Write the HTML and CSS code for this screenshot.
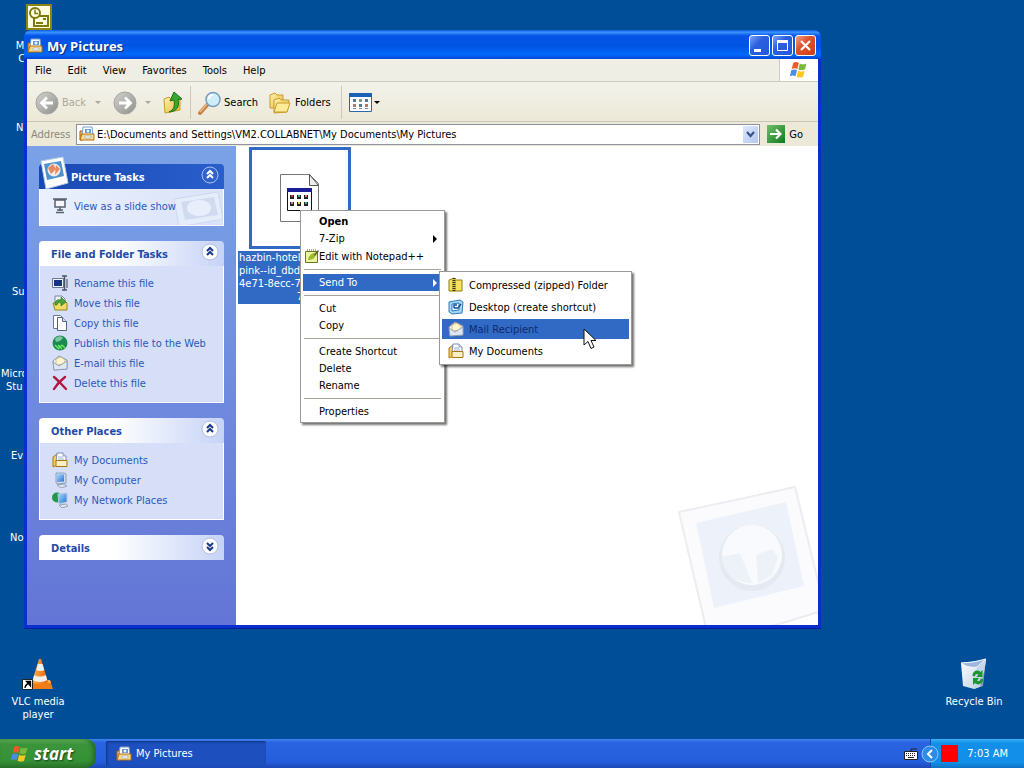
FILE: index.html
```html
<!DOCTYPE html>
<html lang="en">
<head>
<meta charset="utf-8">
<title>My Pictures</title>
<link rel="stylesheet" href="styles.css">
</head>
<body>
<svg class="defs" aria-hidden="true">
  <defs>
    <linearGradient id="gCone" x1="0" x2="1"><stop offset="0" stop-color="#ffb14a"/><stop offset="1" stop-color="#e8650c"/></linearGradient>
    <linearGradient id="gGrey" x1="0" y1="0" x2="1" y2="1"><stop offset="0" stop-color="#d2d2ce"/><stop offset="1" stop-color="#8f8f8c"/></linearGradient>
    <linearGradient id="gFold" x1="0" y1="0" x2="1" y2="1"><stop offset="0" stop-color="#fdf3ae"/><stop offset="1" stop-color="#e9b73a"/></linearGradient>
    <linearGradient id="gGo" x1="0" y1="0" x2="1" y2="1"><stop offset="0" stop-color="#6fc06a"/><stop offset="1" stop-color="#0f7a1c"/></linearGradient>
    <linearGradient id="gScr" x1="0" y1="0" x2="1" y2="1"><stop offset="0" stop-color="#a9dcff"/><stop offset="1" stop-color="#2a6fd0"/></linearGradient>
    <linearGradient id="gBin" x1="0" y1="0" x2="1" y2="1"><stop offset="0" stop-color="#ffffff"/><stop offset="1" stop-color="#b9cce2"/></linearGradient>
  </defs>
  <symbol id="i-pics" viewBox="0 0 16 16">
    <path d="M1 5h3v9H1z" fill="#f2b84c" stroke="#a8640e"/>
    <path d="M4 1h9l1 9H3z" fill="#fff" stroke="#7d9cc4"/>
    <path d="M6 3h6v4H6z" fill="#5d95d6"/><circle cx="9" cy="5" r="1.5" fill="#e9f4ff"/>
    <path d="M1 14l2-6h12v6z" fill="#fbd98b" stroke="#b26f12"/>
    <path d="M6 10h6v2H6z" fill="#fff" stroke="#8aa3c0" stroke-width=".6"/>
  </symbol>
  <symbol id="i-docs" viewBox="0 0 16 16">
    <path d="M1 5l4-3v11l-4 2z" fill="#f7cf5f" stroke="#a9790f"/>
    <path d="M5 1h6l3 3v6H4z" fill="#fff" stroke="#7a8fb5"/><path d="M11 1v3h3" fill="#dbe4f4" stroke="#7a8fb5" stroke-width=".8"/>
    <path d="M6 5h5M6 7h6" stroke="#9ab0d4"/>
    <path d="M4 8.500h11v6H4z" fill="#fbf0c4" stroke="#a9790f"/>
  </symbol>
  <symbol id="i-flag" viewBox="0 0 20 18">
    <path d="M4.200 2C6 .8 8 .8 9.800 2L8.300 8C6.500 6.900 4.600 7 2.700 8z" fill="#ee5a26"/>
    <path d="M10.800 2.400c2 1.200 4.200 1.200 6.700 0L16 8.300c-2.300 1.200-4.500 1.200-6.600 0z" fill="#77bb3c"/>
    <path d="M2.300 9.200c2-1.100 3.900-1 5.700 0L6.500 15.200c-1.800-1-3.700-1.100-5.700 0z" fill="#4a8ce0"/>
    <path d="M9.100 9.700c2 1.100 4.200 1.200 6.600 0l-1.600 6c-2.300 1.200-4.500 1.100-6.500 0z" fill="#fbc723"/>
  </symbol>
  <symbol id="i-mail" viewBox="0 0 16 16">
    <path d="M1 6l6-5 8 4v9l-13 1z" fill="#f6f7fb" stroke="#8793ad"/>
    <path d="M4 4l5-2 4 3v4l-9 1z" fill="#fff6cf" stroke="#c7a65b" stroke-width=".7"/>
    <path d="M1 7l6 4 8-5v8L2 15z" fill="#dfe7f5" stroke="#8793ad" stroke-width=".8"/>
  </symbol>
  <symbol id="i-up" viewBox="0 0 18 18"><circle cx="9" cy="9" r="8" class="disc"/><path d="M6 8l3-3 3 3M6 12l3-3 3 3" class="chev"/></symbol>
  <symbol id="i-down" viewBox="0 0 18 18"><circle cx="9" cy="9" r="8" class="disc"/><path d="M6 6l3 3 3-3M6 10l3 3 3-3" class="chev"/></symbol>
</svg>

<div class="desktop">
  <div class="shortcut s-outlook">
    <svg width="26" height="26" viewBox="0 0 26 26"><path d="M0 0h26v26H0z" fill="#8b8412"/><path d="M2 2h22v22H2z" fill="#fffde2"/><path d="M10 12h12v10H8v-8" fill="none" stroke="#80790b" stroke-width="2"/><circle cx="9" cy="9" r="5" fill="#fffde2" stroke="#80790b" stroke-width="2"/><path d="M9 5.500V9.500h3" fill="none" stroke="#80790b" stroke-width="1.500"/><path d="M10 19h7M17 15h3" stroke="#80790b" stroke-width="2"/></svg>
  </div>
  <span class="shortcut s-mc">M<br>&nbsp;C</span>
  <span class="shortcut s-n">N</span>
  <span class="shortcut s-su">Su</span>
  <span class="shortcut s-micro">Micro<br>Stu</span>
  <span class="shortcut s-ev">Ev</span>
  <span class="shortcut s-no">No</span>
  <div class="shortcut s-vlc">
    <svg width="32" height="32" viewBox="0 0 32 32"><path d="M8 22h20l3 9H6z" fill="#ef7d16"/><path d="M8 22h20l1 3H7z" fill="#ffae52"/><path d="M17 1h2l7 23c-4 3-12 3-16 0z" fill="url(#gCone)"/><path d="M15.800 6h4.700l1.800 6c-2 1.300-6 1.300-8 0zM12.300 17c3 2 8 2 11.500 0l1.400 5c-4 2.600-10.500 2.600-14.400 0z" fill="#f0f0ee"/><path d="M.5 21.500h10v10H.5z" fill="#fff" stroke="#222"/><path d="M3 30c0-3 1-4 4-5M4.500 23.500h4V28z" fill="#000" stroke="#000" stroke-width="1.300"/></svg>
    <span>VLC media<br>player</span>
  </div>
  <div class="shortcut s-bin">
    <svg width="32" height="32" viewBox="0 0 32 32"><path d="M3 5l25-3-4 26-8 3-11-3z" fill="url(#gBin)"/><path d="M3 5l12-1 13-3-9 8c-5 1-11 0-16-4z" fill="#9db8dc" stroke="#f4f9ff"/><path d="M28 2l-4 26-8 3 3-22z" fill="#c5d6e8"/><path d="M27 10l-2 18-3 1z" fill="#7f99b8"/><path d="M14.500 18c0-5 5-7 8-4l2-2v7h-6l2-2.500c-2-1.500-3.500 0-3.500 2zM25 21c0 5-5 7-8 4l-2 2v-7h6l-2 2.500c2 1.500 3.500 0 3.500-2z" fill="#1e9433"/></svg>
    <span>Recycle Bin</span>
  </div>

  <main class="window">
    <header class="titlebar">
      <svg width="16" height="16"><use href="#i-pics"/></svg>
      <h1>My Pictures</h1>
      <div class="winbtns">
        <button class="wb" aria-label="Minimize"><svg width="19" height="19"><path d="M4 13h7v3H4z" fill="#fff"/></svg></button>
        <button class="wb" aria-label="Maximize"><svg width="19" height="19"><path d="M4.500 5.500h10v9h-10z" fill="none" stroke="#fff"/><path d="M4 4h11v3H4z" fill="#fff"/></svg></button>
        <button class="wb close" aria-label="Close"><svg width="19" height="19"><path d="M5 5l9 9M14 5l-9 9" stroke="#fff" stroke-width="2.200"/></svg></button>
      </div>
    </header>

    <nav class="menubar">
      <button>File</button><button>Edit</button><button>View</button><button>Favorites</button><button>Tools</button><button>Help</button>
      <span class="flagcell"><svg width="20" height="18"><use href="#i-flag"/></svg></span>
    </nav>

    <div class="toolbar">
      <button class="tool off back"><svg width="24" height="24"><circle cx="12" cy="12" r="11" fill="url(#gGrey)" stroke="#a5a5a0"/><path d="M18 12H7M12 6.500L6.500 12l5.500 5.500" fill="none" stroke="#fff" stroke-width="2.800"/></svg>Back<i class="caret"></i></button>
      <button class="tool off fwd" aria-label="Forward"><svg width="24" height="24"><circle cx="12" cy="12" r="11" fill="url(#gGrey)" stroke="#a5a5a0"/><path d="M6 12h11M12 6.500l5.500 5.500-5.500 5.500" fill="none" stroke="#fff" stroke-width="2.800"/></svg><i class="caret"></i></button>
      <button class="tool" aria-label="Up"><svg width="20" height="24"><path d="M1 8l5-2 2 2 9-1v12L2 22z" fill="url(#gFold)" stroke="#c99b2b"/><path d="M6 21c5-2 6-6 5-12l-4 1 4-9 8 7-4 .5c2 8-2 12-9 12.500z" fill="#38a92f" stroke="#17701a"/></svg></button>
      <hr class="vline">
      <button class="tool search"><svg width="24" height="24"><path d="M2 22l8-9" stroke="#c98044" stroke-width="4" stroke-linecap="round"/><path d="M2 21l7-8" stroke="#f0bd87" stroke-width="1.200"/><circle cx="15" cy="8.500" r="7" fill="#cdeefa" stroke="#7a9cc0" stroke-width="1.500"/><path d="M11 8c0-3 2-4 4-4" stroke="#fff" stroke-width="2" fill="none"/></svg>Search</button>
      <button class="tool folders"><svg width="22" height="22"><path d="M1 3l5-2 2 2h6v13H1z" fill="url(#gFold)" stroke="#c99b2b"/><path d="M5 8l5-2 2 2h8l-2 12-13 1z" fill="url(#gFold)" stroke="#c99b2b"/><path d="M5 20l3-9h13l-3 9z" fill="#fdeb98" stroke="#c99b2b"/></svg>Folders</button>
      <hr class="vline">
      <button class="tool views" aria-label="Views"><svg width="23" height="19"><path d="M.5.500h22v18H.5z" fill="#fff" stroke="#2b68ad"/><path d="M0 0h23v4H0z" fill="#1b61b6"/><path d="M4 6h3v3H4zM16 6h3v3h-3zM10 11h3v3h-3z" fill="#557a9e"/><path d="M10 6h3v3h-3z" fill="#7b9c86"/><path d="M4 11h3v3H4zM16 11h3v3h-3z" fill="#b57768"/><path d="M4 15.500h3M10 15.500h3M16 15.500h3" stroke="#889"/></svg><i class="caret"></i></button>
    </div>

    <form class="address">
      <label for="addr">Address</label>
      <div class="combo">
        <svg width="16" height="16"><use href="#i-pics"/></svg>
        <input id="addr" type="text" value="E:\Documents and Settings\VM2.COLLABNET\My Documents\My Pictures">
        <button type="button" class="drop" aria-label="Address history"><svg width="15" height="17"><path d="M4 6l3.500 4L11 6" fill="none" stroke="#3c5488" stroke-width="2.200"/></svg></button>
      </div>
      <button type="button" class="go"><svg width="18" height="18"><path d="M0 0h18v18H0z" fill="url(#gGo)"/><path d="M3 9h10M9 4.500L13.500 9 9 13.500" fill="none" stroke="#fff" stroke-width="2.200"/></svg>Go</button>
    </form>

    <div class="content">
      <aside class="tasks">
        <section class="box primary">
          <svg class="badge" width="32" height="34" viewBox="0 0 32 34"><path d="M2 5l22-4 5 26-22 6z" fill="#fff" stroke="#b9c9e2"/><path d="M5 8l17-3 3 15-17 4z" fill="#4c93cf"/><circle cx="15" cy="14" r="6.500" fill="#f3ece6"/><path d="M9 12l5-4 3 5-5 5zM17 9l4 4-5 6z" fill="#e58a62"/></svg>
          <h2>Picture Tasks<button aria-label="Collapse"><svg width="18" height="18"><use href="#i-up"/></svg></button></h2>
          <div class="body">
            <svg class="mark" width="54" height="34" viewBox="0 0 54 34"><path d="M5 8l44-7 5 27-44 8z" fill="#e6edfa" stroke="#cdd8ee"/><path d="M12 11l33-5 4 18-33 5z" fill="#d0dbf0"/><ellipse cx="30" cy="17" rx="12" ry="8" fill="#e8eefa"/></svg>
            <a href="#"><svg width="16" height="16"><path d="M1 1h14M3 2h10v7H3z" fill="#f5f7fa" stroke="#59616e" stroke-width="1.500"/><path d="M8 9v4M4 14.500h8M5 12h6" stroke="#59616e" stroke-width="1.500"/></svg>View as a slide show</a>
          </div>
        </section>
        <section class="box">
          <h2>File and Folder Tasks<button aria-label="Collapse"><svg width="18" height="18"><use href="#i-up"/></svg></button></h2>
          <div class="body">
            <a href="#"><svg width="16" height="16"><path d="M.5 3.500h11v9H.5z" fill="#eef3fb" stroke="#6b7892"/><path d="M2 5h8v6H2z" fill="#16337c"/><path d="M10 1h5M10 15h5M12.500 1v14" stroke="#4d5668" stroke-width="1.500"/><path d="M15 4v9" stroke="#8a93a5" stroke-width="2"/></svg>Rename this file</a>
            <a href="#"><svg width="16" height="16"><path d="M3 1h7l3 3v9H3z" fill="#f5f7fb" stroke="#7783a0"/><path d="M1 8h5l1-2h6l2 2v7H3z" fill="#f1dc63" stroke="#94851f"/><path d="M3 10c0-5 3-6 6-5V2l5 5-5 4V8c-2-1-4 0-4 2z" fill="#4ba33b" stroke="#206b20" stroke-width=".6"/></svg>Move this file</a>
            <a href="#"><svg width="16" height="16"><path d="M1.500.500h7l3 3v10h-10z" fill="#fff" stroke="#6b7a99"/><path d="M5.500 2.500h5l4 4v9h-9z" fill="#fff" stroke="#536485"/><path d="M10.500 2.500v4h4" fill="#d5def0" stroke="#536485"/></svg>Copy this file</a>
            <a href="#"><svg width="16" height="16"><circle cx="8" cy="8" r="7.500" fill="#1c8a50"/><path d="M3 4c3-4 7-3 8-1l-3 3-4 1z" fill="#7cc9a0"/><path d="M3 10l4 4M6 10l4 4M6 14l4-4M10 10l3 3" stroke="#6df060" stroke-width="1.300"/></svg>Publish this file to the Web</a>
            <a href="#"><svg width="16" height="16"><use href="#i-mail"/></svg>E-mail this file</a>
            <a href="#"><svg width="16" height="16"><path d="M2 2c4 3 8 8 12 12M13 2C9 5 5 9 2 14" fill="none" stroke="#b5173f" stroke-width="2.400" stroke-linecap="round"/></svg>Delete this file</a>
          </div>
        </section>
        <section class="box">
          <h2>Other Places<button aria-label="Collapse"><svg width="18" height="18"><use href="#i-up"/></svg></button></h2>
          <div class="body">
            <a href="#"><svg width="16" height="16"><use href="#i-docs"/></svg>My Documents</a>
            <a href="#"><svg width="16" height="16"><path d="M4 1h8l2 1v9l-8 1-2-1z" fill="#cfd9ea" stroke="#7890b5" stroke-width=".8"/><path d="M5 2l7 .5v7L5 10z" fill="url(#gScr)"/><path d="M5 13l7-1 3 2-6 2z" fill="#dde3ec" stroke="#8593aa" stroke-width=".8"/></svg>My Computer</a>
            <a href="#"><svg width="16" height="16"><circle cx="5" cy="5.500" r="5" fill="#1f9a4e"/><path d="M6 2l9-1v9l-8 2z" fill="url(#gScr)" stroke="#b7cbe4"/><path d="M7 13l7-1 2 2-6 2z" fill="#dde3ec" stroke="#8593aa" stroke-width=".8"/></svg>My Network Places</a>
          </div>
        </section>
        <section class="box">
          <h2>Details<button aria-label="Expand"><svg width="18" height="18"><use href="#i-down"/></svg></button></h2>
        </section>
      </aside>

      <div class="files">
        <figure class="file">
          <div class="thumb"><svg width="40" height="48"><path d="M.5.500h29l9 9v38H.5z" fill="#fff" stroke="#777"/><path d="M29.500.500l9 11h-9z" fill="#eee" stroke="#555"/><path d="M7.500 14.500h24v22h-24z" fill="#fff" stroke="#111"/><path d="M7 14h25v4H7z" fill="#1a1e96"/><path d="M10 21h4v4h-4zM17 21h4v4h-4zM24 21h4v4h-4zM10 28h4v4h-4zM17 28h4v4h-4zM24 28h4v4h-4z" fill="#222"/><path d="M11 21h2v2h-2z" fill="#c33"/><path d="M18 21h2v2h-2zM25 28h2v2h-2z" fill="#4a9"/><path d="M25 21h2v2h-2zM11 28h2v2h-2z" fill="#d77"/><path d="M18 28h2v2h-2z" fill="#dd3"/></svg></div>
          <figcaption>hazbin-hotel-<br>pink--id_dbd-<br>4e71-8ecc-7<span>7</span></figcaption>
        </figure>
        <svg class="watermark" width="142" height="140" viewBox="0 0 142 140"><path d="M3 27L119 2l30 123L34 160z" fill="#fbfbfe" stroke="#ececf1" stroke-width="2"/><path d="M20 38l90-21 18 84-90 22z" fill="#edf1f9"/><circle cx="76" cy="73" r="33" fill="#e4e9f2"/><circle cx="76" cy="70" r="30" fill="#f9fafd"/><path d="M46 72l18-4 12 30c-16 0-28-8-30-26zM80 70l16-6 6 8-6 18-14 8z" fill="#edf1f8"/></svg>
      </div>
    </div>
  </main>

  <div class="popup context" role="menu">
    <button class="row bold">Open</button>
    <button class="row">7-Zip<i class="arrow"></i></button>
    <button class="row tall"><svg width="14" height="14"><path d="M.5 2.500h12v11H.5z" fill="#eef3a3" stroke="#6d7a1c"/><path d="M2 1h9" stroke="#555" stroke-dasharray="1 1"/><path d="M3 11c0-4 3-6 8-8 0 5-2 8-8 8z" fill="#9cbd2b"/><path d="M9 6l4-5 1 1-4 5z" fill="#5a5a3c"/></svg>Edit with Notepad++</button>
    <hr>
    <div class="holder">
      <button class="row on">Send To<i class="arrow"></i></button>
      <div class="popup sub" role="menu">
        <button class="row"><svg width="16" height="16"><path d="M1 3l5-2 2 2h6v11H1z" fill="#f4e25f" stroke="#8d7d12"/><path d="M4 1h4v14H4z" fill="#d8c23a"/><path d="M6 1v13" stroke="#333" stroke-width="3" stroke-dasharray="1 1"/></svg>Compressed (zipped) Folder</button>
        <button class="row"><svg width="16" height="16"><path d="M1 3l11-2 3 2-1 11-10 1-3-2z" fill="#a9d5f6" stroke="#2a7dbd"/><path d="M4 5l7-1v7l-7 1z" fill="#fff" stroke="#2a7dbd"/><path d="M6 9h4l3-4M9 6h-3v3" fill="none" stroke="#154d94" stroke-width="1.400"/></svg>Desktop (create shortcut)</button>
        <button class="row on dark"><svg width="16" height="16"><use href="#i-mail"/></svg>Mail Recipient</button>
        <button class="row"><svg width="16" height="16"><use href="#i-docs"/></svg>My Documents</button>
      </div>
    </div>
    <hr>
    <button class="row">Cut</button>
    <button class="row">Copy</button>
    <hr>
    <button class="row">Create Shortcut</button>
    <button class="row">Delete</button>
    <button class="row">Rename</button>
    <hr>
    <button class="row">Properties</button>
  </div>
  <svg class="cursor" width="14" height="22" viewBox="0 0 14 22"><path d="M1 1v16l4-3.500 3 7 3-1.500-3-6.500h5z" fill="#fff" stroke="#111"/></svg>
</div>

<footer class="taskbar">
  <button class="start"><svg width="20" height="18"><use href="#i-flag"/></svg>start</button>
  <button class="task"><svg width="16" height="16"><use href="#i-pics"/></svg>My Pictures</button>
  <svg class="kbd" width="14" height="12"><path d="M7 3V1h6" fill="none" stroke="#222"/><path d="M.5 3.500h13v8H.5z" fill="#fff" stroke="#222"/><path d="M2 5.500h10M2 7.500h10" stroke="#222" stroke-dasharray="1 1"/><path d="M4 9.500h6" stroke="#222"/></svg>
  <div class="tray">
    <button class="hide" aria-label="Show hidden icons"><svg width="18" height="18"><circle cx="9" cy="9" r="8" fill="#2f8be8" stroke="#8cc8f8"/><path d="M11 5L7 9l4 4" fill="none" stroke="#fff" stroke-width="2"/></svg></button>
    <span class="red"></span>
    <time>7:03 AM</time>
  </div>
</footer>
</body>
</html>
```
FILE: styles.css
```css
* { box-sizing: border-box; }
body {
  margin: 0;
  height: 100vh;
  display: flex;
  flex-direction: column;
  overflow: hidden;
  background: #004e98;
  font: 11px/13px "DejaVu Sans Condensed", "Noto Sans", sans-serif;
  color: #000;
}
button, input { font: inherit; color: inherit; border: 0; padding: 0; background: none; text-align: left; }
svg { display: block; flex: none; }
.defs { position: absolute; width: 0; height: 0; }

.desktop { position: relative; flex: 1; min-height: 0; }

/* Desktop shortcuts */
.shortcut { position: absolute; color: #fff; text-align: center; }
.s-outlook { left: 26px; top: 4px; }
.s-mc { left: 15px; top: 39px; }
.s-n { left: 16px; top: 121px; }
.s-su { left: 12px; top: 285px; }
.s-micro { left: 1px; top: 367px; }
.s-ev { left: 11px; top: 449px; }
.s-no { left: 10px; top: 531px; }
.s-vlc, .s-bin { display: flex; flex-direction: column; align-items: center; gap: 5px; width: 76px; }
.s-vlc { left: 0; bottom: 18px; }
.s-bin { right: 12px; bottom: 31px; }

/* Explorer window */
.window {
  position: absolute;
  inset: 30px 203px 110px 24px;
  display: flex;
  flex-direction: column;
  padding: 0 3px 3px;
  background: #0a2fd0;
  border-radius: 7px 7px 0 0;
  border-bottom: 1px solid #001f9c;
}
.titlebar {
  display: flex;
  align-items: center;
  gap: 4px;
  height: 29px;
  margin: 0 -3px;
  padding: 2px 5px 0 3px;
  border-radius: 7px 7px 0 0;
  background: linear-gradient(#0a5ce0, #3a93ff 8%, #0555e8 20%, #0054e3 55%, #0268fc 85%, #0144d0);
}
.titlebar h1 {
  flex: 1;
  margin: 0;
  color: #fff;
  font: bold 13px/16px "Open Sans", sans-serif;
  text-shadow: 1px 1px 1px #0a2a7c;
}
.winbtns { display: flex; gap: 2px; }
.wb { border: 1px solid #fff; border-radius: 3px; background: linear-gradient(135deg, #7fa4f5, #2a5fe0 40%, #2459d8); }
.close { background: linear-gradient(135deg, #f0a088, #e0532e 40%, #cf3d14); }

.menubar { display: flex; height: 23px; background: #efeee4; border-bottom: 1px solid #cdcabb; }
.menubar button { padding: 0 8px; }
.flagcell { display: flex; align-items: center; justify-content: center; width: 39px; margin-left: auto; background: #fff; border-left: 1px solid #cdcabb; }

.toolbar {
  display: flex;
  align-items: center;
  height: 40px;
  padding: 2px 8px 0;
  background: linear-gradient(#f3f2ea, #ece9d8);
  border-bottom: 1px solid #c9c6b5;
}
.tool { display: flex; align-items: center; gap: 4px; }
.off { color: #aca899; }
.caret { border: 3px solid transparent; border-top-color: currentColor; border-bottom: 0; }
.back { gap: 3px; }
.back .caret { margin-left: 6px; }
.fwd { margin: 0 12px; gap: 8px; }
.vline { align-self: stretch; width: 1px; margin: 2px 7px; border: 0; background: #cdc9b4; }
.search { gap: 2px; }
.folders { margin: 0 3px 0 11px; }
.views { gap: 2px; }

.address { display: flex; align-items: center; height: 24px; padding: 1px 15px 1px 4px; background: #ece9d8; margin: 0; }
.address label { width: 45px; color: #8a887c; }
.combo { flex: 1; display: flex; align-items: center; gap: 2px; height: 21px; padding: 1px 1px 1px 2px; background: #fff; border: 1px solid #8b93a3; }
.combo input { flex: 1; min-width: 0; outline: 0; }
.drop { background: linear-gradient(135deg, #dde7fd, #b3c6f4); border-radius: 1px; }
.go { display: flex; align-items: center; gap: 4px; margin-left: 7px; }

.content { flex: 1; display: flex; min-height: 0; background: #fff; }

/* Task pane */
.tasks {
  width: 209px;
  padding: 18px 12px;
  display: flex;
  flex-direction: column;
  gap: 15px;
  background: linear-gradient(#7ba2e7, #6375d6);
}
.box { --disc: #fdfdff; --ring: #b3bfdd; --chev: #1b3a86; position: relative; color: #2a57bd; }
.box h2 {
  display: flex;
  align-items: center;
  justify-content: space-between;
  height: 25px;
  margin: 0;
  padding: 2px 5px 0 12px;
  border-radius: 4px 4px 0 0;
  background: linear-gradient(90deg, #fff 40%, #c6d3f7);
  color: #1f4aa8;
  font: bold 11px/13px "DejaVu Sans Condensed", sans-serif;
}
.box h2 button { align-self: flex-start; }
.disc { fill: var(--disc); stroke: var(--ring); }
.chev { fill: none; stroke: var(--chev); stroke-width: 2; }
.body { position: relative; padding: 7px 12px 9px; background: #d6dff7; border: 1px solid #fff; border-top: 0; }
.body a { position: relative; display: flex; align-items: center; gap: 6px; height: 20px; color: inherit; text-decoration: none; white-space: nowrap; }
.primary { --disc: #2f62cc; --ring: #a9c0f0; --chev: #fff; }
.primary h2 { padding-left: 32px; background: linear-gradient(90deg, #1848b4, #2a5fcb); color: #fff; }
.primary .body { background: linear-gradient(90deg, #eaf0fd, #d9e3f9); }
.badge { position: absolute; left: 0; top: -8px; z-index: 1; }
.mark { position: absolute; right: 0; bottom: 0; }

/* File view */
.files { position: relative; flex: 1; overflow: hidden; }
.file { width: 124px; margin: 1px 2px; }
.thumb { display: flex; align-items: center; justify-content: center; width: 102px; height: 102px; margin: 0 11px 2px; border: 3px solid #316ac5; background: #fff; }
.file figcaption { padding: 0 1px 1px; background: #316ac5; color: #fff; }
.file span { display: block; text-align: center; }
.watermark { position: absolute; right: 0; bottom: 0; }

/* Menus */
.popup { position: absolute; padding: 2px; background: #fff; border: 1px solid #9a9a94; box-shadow: 2px 2px 2px rgba(0, 0, 0, .55); }
.context { left: 300px; top: 210px; width: 145px; }
.popup hr { height: 1px; margin: 4px 1px; border: 0; background: #a5a298; }
.row { position: relative; display: flex; align-items: center; width: 100%; height: 17px; padding-left: 16px; white-space: nowrap; }
.row.bold { font-weight: bold; }
.row.tall { height: 18px; padding-left: 2px; }
.row.on { background: #316ac5; color: #fff; }
.arrow { margin: 0 5px 0 auto; border: 4px solid transparent; border-left-color: currentColor; border-right: 0; }
.holder { position: relative; }
.sub { display: flex; flex-direction: column; gap: 2px; left: calc(100% - 3px); top: -3px; width: 193px; padding: 3px 2px; }
.sub .row { height: 20px; gap: 5px; padding-left: 6px; }
.sub .row.dark { color: #10296b; }
.cursor { position: absolute; left: 583px; top: 328px; }

/* Taskbar */
.taskbar {
  display: flex;
  align-items: stretch;
  height: 29px;
  background: linear-gradient(#3f84f0, #2a63e0 12%, #245edb 80%, #1b47b5);
  color: #fff;
}
.start {
  display: flex;
  align-items: center;
  gap: 4px;
  width: 96px;
  padding-left: 10px;
  border-radius: 0 10px 10px 0;
  background: linear-gradient(#69b565, #3b943a 18%, #369136 75%, #2a742a);
  box-shadow: inset -3px 0 4px #256b25;
  font: italic bold 17px/20px "Open Sans", sans-serif;
  text-shadow: 1px 1px 2px #173f17;
}
.task { display: flex; align-items: center; gap: 4px; width: 160px; margin: 2px 0 2px 10px; padding-left: 10px; border-radius: 2px; background: #1e4fbe; box-shadow: inset 1px 1px 2px #12347f; }
.kbd { margin: 9px 6px 0 auto; }
.tray { display: flex; align-items: center; gap: 2px; padding-right: 16px; background: linear-gradient(#35b4f5, #1290e9 15%, #1290e9 80%, #0f72c4); border-left: 1px solid #0d4f9e; margin-left: 6px; }
.hide { margin-left: -10px; }
.red { width: 17px; height: 17px; background: #f00; }
.tray time { margin-left: 7px; }
```
